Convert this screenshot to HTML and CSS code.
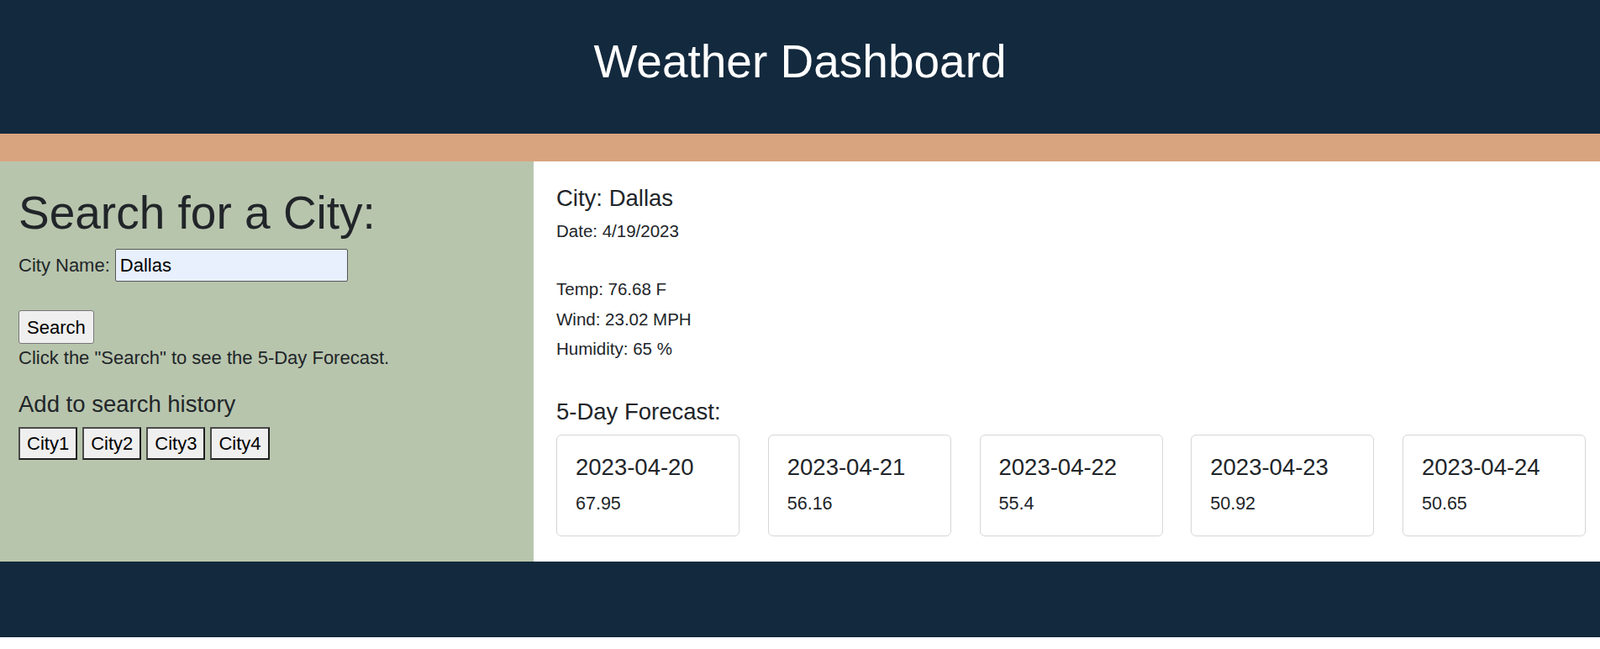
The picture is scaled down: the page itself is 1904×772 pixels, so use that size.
FILE: index.html
```html
<!DOCTYPE html>
<html lang="en">
<head>
<meta charset="utf-8">
<title>Weather Dashboard</title>
<link rel="stylesheet" href="styles.css">
</head>
<body>
<header class="site-header">
  <h1 class="site-title">Weather Dashboard</h1>
</header>
<div class="band"></div>
<main class="main">
  <aside class="sidebar">
    <h2 class="search-title">Search for a City:</h2>
    <div class="field">
      <label class="field-label" for="city">City Name:</label>
      <input class="field-input" id="city" type="text" value="Dallas">
    </div>
    <button class="search-btn" type="button">Search</button>
    <p class="hint">Click the "Search" to see the 5-Day Forecast.</p>
    <h5 class="history-title">Add to search history</h5>
    <div class="history">
      <button class="history-btn" type="button">City1</button>
      <button class="history-btn" type="button">City2</button>
      <button class="history-btn" type="button">City3</button>
      <button class="history-btn" type="button">City4</button>
    </div>
  </aside>
  <section class="current">
    <h5 class="city-name">City: Dallas</h5>
    <p class="info info-date">Date: 4/19/2023</p>
    <p class="info info-temp">Temp: 76.68 F</p>
    <p class="info">Wind: 23.02 MPH</p>
    <p class="info">Humidity: 65 %</p>
    <h5 class="forecast-title">5-Day Forecast:</h5>
    <div class="cards">
      <div class="card"><h5 class="card-date">2023-04-20</h5><p class="card-value">67.95</p></div>
      <div class="card"><h5 class="card-date">2023-04-21</h5><p class="card-value">56.16</p></div>
      <div class="card"><h5 class="card-date">2023-04-22</h5><p class="card-value">55.4</p></div>
      <div class="card"><h5 class="card-date">2023-04-23</h5><p class="card-value">50.92</p></div>
      <div class="card"><h5 class="card-date">2023-04-24</h5><p class="card-value">50.65</p></div>
    </div>
  </section>
</main>
<footer class="site-footer"></footer>
</body>
</html>
```

FILE: styles.css
```css
* {
  box-sizing: border-box;
}

html, body {
  margin: 0;
  padding: 0;
}

body {
  font-family: "Liberation Sans", Arial, sans-serif;
  color: #212529;
  background: #ffffff;
  font-size: 22px;
  line-height: 1.5;
}

h1, h2, h5, p {
  margin: 0;
  font-weight: 400;
}

.site-header {
  height: 159px;
  background: #13293d;
  padding-top: 40px;
  text-align: center;
}

.site-title {
  color: #ffffff;
  font-size: 55px;
  line-height: 66px;
}

.band {
  height: 33px;
  background: #d8a47f;
}

.main {
  display: grid;
  grid-template-columns: 635px 1fr;
  height: 476px;
}

.sidebar {
  background: #b8c5ad;
  padding: 27.5px 0 0 22px;
}

.search-title {
  font-size: 55px;
  line-height: 66px;
}

.field {
  display: flex;
  align-items: center;
  gap: 6px;
  margin-top: 10.5px;
}

.field-label {
  font-size: 22px;
  line-height: 25px;
}

.field-input {
  width: 277px;
  height: 39px;
  padding: 0 5px;
  font-family: inherit;
  font-size: 22px;
  color: #000000;
  background: #e8f0fe;
  border: 1px solid #555555;
  border-radius: 2px;
}

.search-btn {
  display: block;
  margin-top: 34px;
  height: 40px;
  padding: 0 9px;
  font-family: inherit;
  font-size: 22px;
  line-height: 33px;
  color: #000000;
  background: #efefef;
  border: 1px solid #767676;
  border-radius: 3px;
}

.hint {
  font-size: 22px;
  line-height: 33px;
}

.history-title {
  font-size: 27.5px;
  line-height: 33px;
  margin-top: 22px;
}

.history {
  display: flex;
  gap: 6px;
  margin-top: 11px;
}

.history-btn {
  height: 39px;
  padding: 1px 8px;
  font-family: inherit;
  font-size: 22px;
  line-height: 33px;
  color: #000000;
  background: #efefef;
  border: 2px solid;
  border-color: #4a4a4a #1f1f1f #1f1f1f #4a4a4a;
  border-radius: 0;
}

.current {
  background: #ffffff;
  padding: 27px 17px 0 27px;
}

.city-name,
.forecast-title {
  font-size: 27.5px;
  line-height: 33px;
}

.info {
  font-size: 20.5px;
  line-height: 35.5px;
}

.info-date {
  margin-top: 5px;
}

.info-temp {
  margin-top: 33.7px;
}

.forecast-title {
  margin-top: 40px;
}

.cards {
  display: flex;
  justify-content: space-between;
  margin-top: 11.7px;
}

.card {
  width: 218px;
  height: 121px;
  padding: 21px 22px 22px;
  border: 1px solid #d6d6d6;
  border-radius: 6px;
}

.card-date {
  font-size: 27.5px;
  line-height: 33px;
}

.card-value {
  font-size: 21.5px;
  line-height: 32.25px;
  margin-top: 11px;
}

.site-footer {
  height: 90px;
  background: #13293d;
}
```
